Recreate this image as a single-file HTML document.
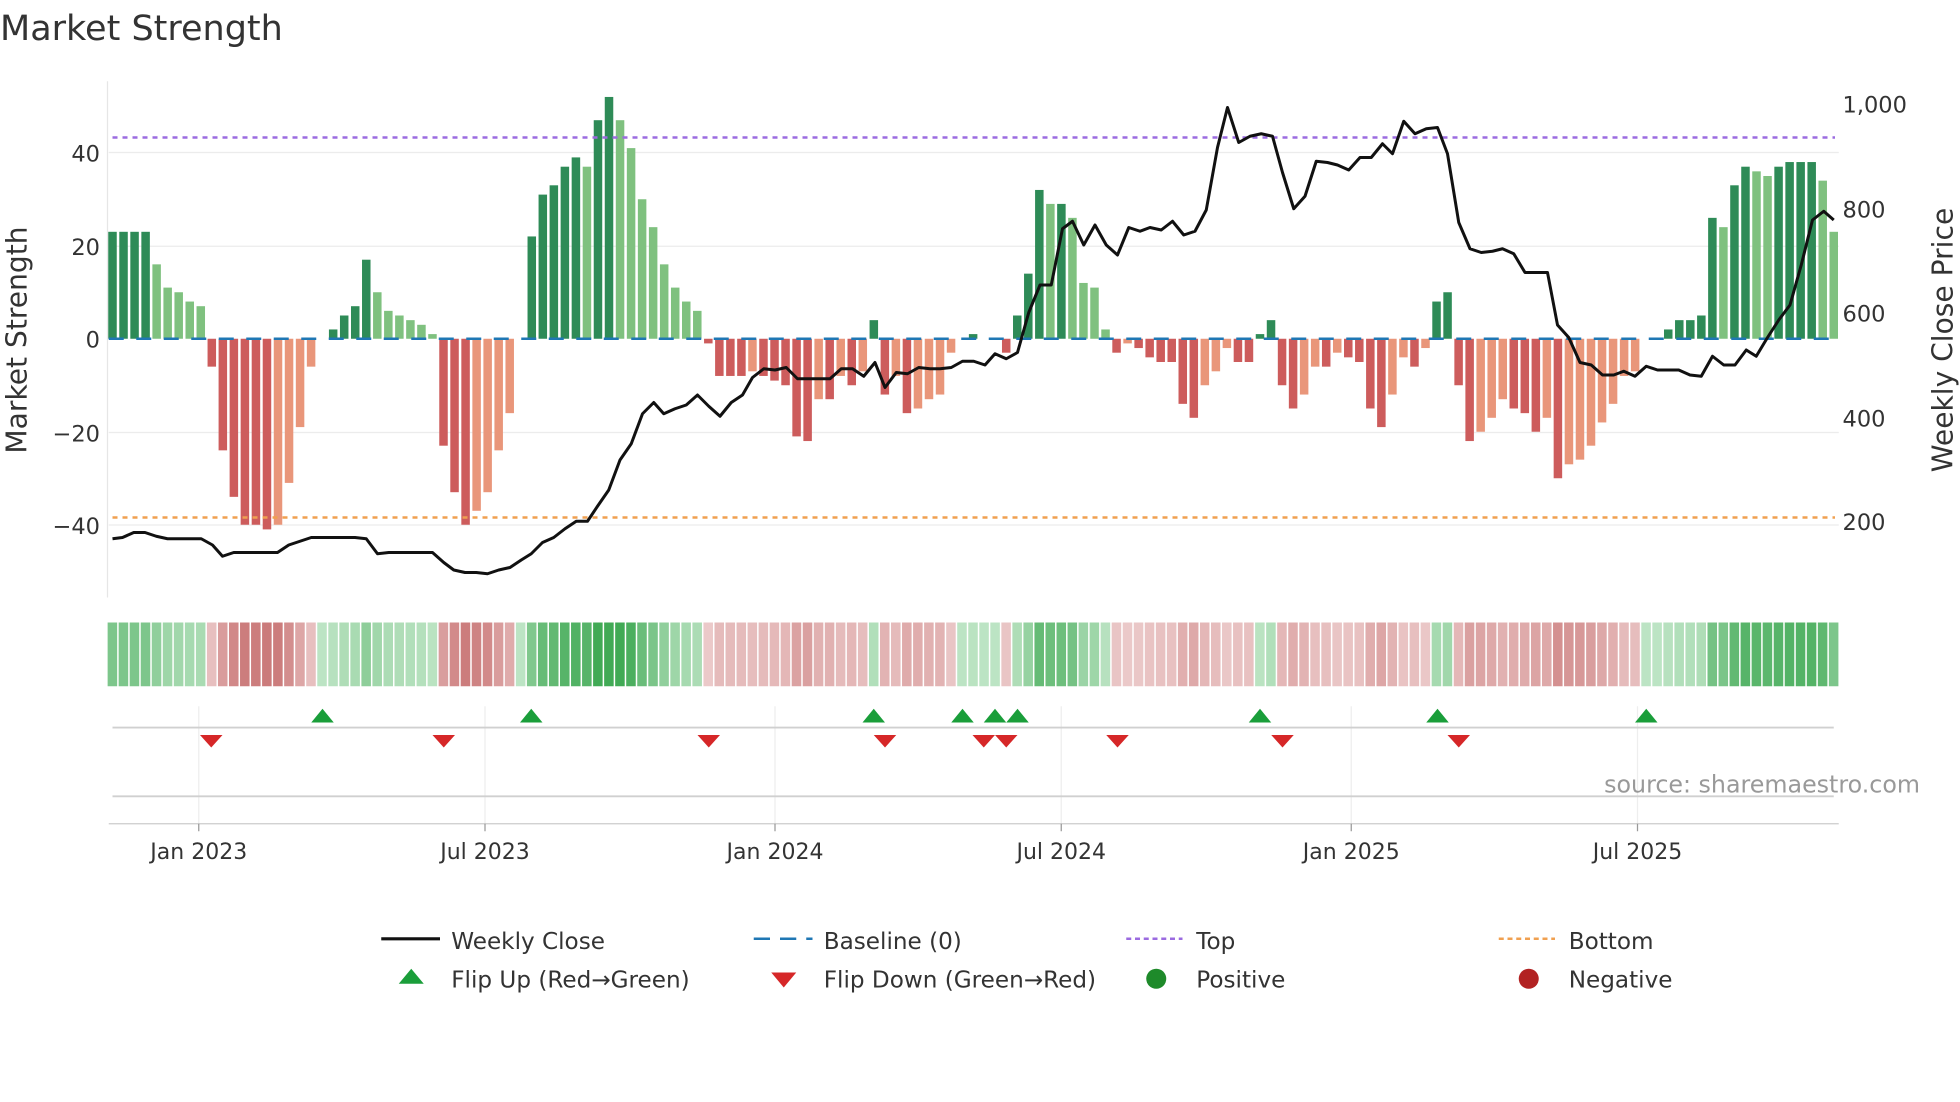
<!DOCTYPE html>
<html><head><meta charset="utf-8"><style>
html,body{margin:0;padding:0;background:#fff;width:1960px;height:1102px;overflow:hidden}
svg{display:block;font-family:"DejaVu Sans","Liberation Sans",sans-serif}
</style></head><body>
<svg id="s" width="1960" height="1102" viewBox="0 0 1568 881.6" xmlns="http://www.w3.org/2000/svg">
<rect width="1568" height="882" fill="#fff"/>
<text x="0" y="32" font-size="28" fill="#333">Market Strength</text>
<g stroke="#ececec" stroke-width="1">
<line x1="87" x2="1471" y1="122" y2="122"/><line x1="87" x2="1471" y1="197" y2="197"/>
<line x1="87" x2="1471" y1="346" y2="346"/><line x1="87" x2="1471" y1="420" y2="420"/>
</g>
<line x1="86" x2="86" y1="65" y2="478" stroke="#e6e6e6"/>
<g font-size="18" fill="#333" text-anchor="end">
<text x="80" y="129">40</text><text x="80" y="204">20</text><text x="80" y="278">0</text>
<text x="80" y="353">−20</text><text x="80" y="427">−40</text>
</g>
<g font-size="18" fill="#333">
<text x="1474" y="90">1,000</text><text x="1474" y="174">800</text><text x="1474" y="257">600</text>
<text x="1474" y="341">400</text><text x="1474" y="424">200</text>
</g>
<text transform="translate(21,272) rotate(-90)" font-size="22.5" fill="#333" text-anchor="middle">Market Strength</text>
<text transform="translate(1562,272) rotate(-90)" font-size="22.5" fill="#333" text-anchor="middle">Weekly Close Price</text>
<g id="bars"></g>
<g id="heat"></g>
<line x1="87" x2="1471" y1="271" y2="271" stroke="#1f77b4" stroke-width="2" stroke-dasharray="12,10"/>
<line x1="90" x2="1468" y1="110" y2="110" stroke="#9b6be0" stroke-width="2" stroke-dasharray="4,4"/>
<line x1="90" x2="1468" y1="414" y2="414" stroke="#f0a050" stroke-width="2" stroke-dasharray="4,4"/>
<polyline id="price" fill="none" stroke="#111" stroke-width="2.4" stroke-linejoin="round"/>
<g stroke="#eee"><line x1="159" x2="159" y1="565" y2="660"/><line x1="388" x2="388" y1="565" y2="660"/><line x1="620" x2="620" y1="565" y2="660"/><line x1="849" x2="849" y1="565" y2="660"/><line x1="1081" x2="1081" y1="565" y2="660"/><line x1="1310" x2="1310" y1="565" y2="660"/></g>
<line x1="90" x2="1467" y1="582" y2="582" stroke="#d0d0d0" stroke-width="1.5"/>
<line x1="90" x2="1467" y1="637" y2="637" stroke="#d0d0d0" stroke-width="1.5"/>
<line x1="87" x2="1471" y1="659" y2="659" stroke="#ccc" stroke-width="1"/>
<g id="mk"></g>
<text x="1536" y="634" font-size="19" fill="#999" text-anchor="end">source: sharemaestro.com</text>
<g stroke="#999"><line x1="159" x2="159" y1="659" y2="665"/><line x1="388" x2="388" y1="659" y2="665"/><line x1="620" x2="620" y1="659" y2="665"/><line x1="849" x2="849" y1="659" y2="665"/><line x1="1081" x2="1081" y1="659" y2="665"/><line x1="1310" x2="1310" y1="659" y2="665"/></g>
<g font-size="17.6" fill="#333" text-anchor="middle">
<text x="159" y="687">Jan 2023</text><text x="388" y="687">Jul 2023</text><text x="620" y="687">Jan 2024</text>
<text x="849" y="687">Jul 2024</text><text x="1081" y="687">Jan 2025</text><text x="1310" y="687">Jul 2025</text>
</g>
<g font-size="18.5" fill="#333">
<line x1="305" x2="352" y1="751" y2="751" stroke="#111" stroke-width="2.5"/><text x="361" y="759">Weekly Close</text>
<line x1="603" x2="650" y1="751" y2="751" stroke="#1f77b4" stroke-width="2" stroke-dasharray="13,8"/><text x="659" y="759">Baseline (0)</text>
<line x1="901" x2="946" y1="751" y2="751" stroke="#9b6be0" stroke-width="2" stroke-dasharray="4,3"/><text x="957" y="759">Top</text>
<line x1="1199" x2="1244" y1="751" y2="751" stroke="#f0a050" stroke-width="2" stroke-dasharray="4,3"/><text x="1255" y="759">Bottom</text>
<polygon points="319,787 329,775 339,787" fill="#1a9e3a"/><text x="361" y="790">Flip Up (Red→Green)</text>
<polygon points="617,778 637,778 627,790" fill="#d62728"/><text x="659" y="790">Flip Down (Green→Red)</text>
<circle cx="925" cy="783" r="8" fill="#1e8a2a"/><text x="957" y="790">Positive</text>
<circle cx="1223" cy="783" r="8" fill="#b22222"/><text x="1255" y="790">Negative</text>
</g>
</svg>
<script>
var v=[23,23,23,23,16,11,10,8,7,-6,-24,-34,-40,-40,-41,-40,-31,-19,-6,0,2,5,7,17,10,6,5,4,3,1,-23,-33,-40,-37,-33,-24,-16,0,22,31,33,37,39,37,47,52,47,41,30,24,16,11,8,6,-1,-8,-8,-8,-7,-8,-9,-10,-21,-22,-13,-13,-8,-10,-7,4,-12,-8,-16,-15,-13,-12,-3,0,1,0,0,-3,5,14,32,29,29,26,12,11,2,-3,-1,-2,-4,-5,-5,-14,-17,-10,-7,-2,-5,-5,1,4,-10,-15,-12,-6,-6,-3,-4,-5,-15,-19,-12,-4,-6,-2,8,10,-10,-22,-20,-17,-13,-15,-16,-20,-17,-30,-27,-26,-23,-18,-14,-8,-7,0,0,2,4,4,5,26,24,33,37,36,35,37,38,38,38,34,23];
var n=v.length, step=(1467-90)/(n-1), ns="http://www.w3.org/2000/svg";
var B=document.getElementById('bars'),H=document.getElementById('heat');
function el(t,a,p){var e=document.createElementNS(ns,t);for(var k in a)e.setAttribute(k,a[k]);p.appendChild(e);return e;}
for(var i=0;i<n;i++){
 var x=90+i*step, val=v[i], pv=i?v[i-1]:0;
 var dark=Math.abs(val)>=Math.abs(pv)||(val*pv<0);
 if(val!==0){
  var h=Math.abs(val)*3.72, y=val>0?271-h:271;
  var c=val>0?(dark?'#2e8b57':'#7fc17f'):(dark?'#cd5c5c':'#e9967a');
  el('rect',{x:x-3.4,y:y,width:6.8,height:h,fill:c},B);
 }
 var a=Math.min(Math.abs(val)/45,1);
 var col;
 if(val>=0){var t=0.15+0.85*a;col='rgb('+Math.round(210-t*145)+','+Math.round(238-t*68)+','+Math.round(215-t*130)+')';}
 else{var t=0.15+0.85*a;col='rgb('+Math.round(242-t*42)+','+Math.round(218-t*103)+','+Math.round(218-t*103)+')';}
 el('rect',{x:x-4.4+0.5,y:498,width:step-1.2,height:51,fill:col},H);
}
var p=[90,431,98,430,107,426,116,426,125,429,134,431,143,431,152,431,161,431,170,436,178,445,187,442,196,442,205,442,213,442,222,442,231,436,240,433,249,430,258,430,266,430,275,430,284,430,293,431,302,443,311,442,319,442,328,442,337,442,346,442,355,450,363,456,372,458,381,458,390,459,399,456,408,454,417,448,425,443,434,434,443,430,452,423,461,417,470,417,478,405,487,392,496,368,505,355,514,331,523,322,531,331,540,327,549,324,558,316,567,325,576,333,585,322,594,316,602,302,611,295,620,296,629,294,638,303,647,303,655,303,664,303,673,295,682,295,691,301,700,290,708,310,717,298,726,299,735,294,744,295,752,295,761,294,770,289,779,289,788,292,796,283,805,287,814,282,823,250,832,228,841,228,850,183,858,177,867,196,876,180,885,196,894,204,903,182,912,185,920,182,929,184,938,177,947,188,956,185,965,168,974,118,982,86,991,114,1000,109,1009,107,1018,109,1026,138,1035,167,1044,157,1053,129,1062,130,1070,132,1079,136,1088,126,1097,126,1106,115,1114,123,1123,97,1132,107,1141,103,1150,102,1158,123,1167,178,1176,199,1185,202,1194,201,1202,199,1211,203,1220,218,1229,218,1238,218,1246,260,1255,270,1264,290,1273,292,1282,300,1291,300,1299,297,1308,301,1317,293,1326,296,1335,296,1343,296,1352,300,1361,301,1370,285,1379,292,1388,292,1397,280,1405,285,1414,270,1423,256,1432,244,1441,212,1450,176,1459,169,1467,176];
var s='';for(var i=0;i<p.length;i+=2)s+=p[i]+','+p[i+1]+' ';
document.getElementById('price').setAttribute('points',s);
var M=document.getElementById('mk');
[258,425,699,770,796,814,1008,1150,1317].forEach(function(x){el('polygon',{points:(x-9)+',578 '+x+',567 '+(x+9)+',578',fill:'#1a9e3a'},M);});
[169,355,567,708,787,805,894,1026,1167].forEach(function(x){el('polygon',{points:(x-9)+',588 '+(x+9)+',588 '+x+',598',fill:'#d62728'},M);});
</script>
</body></html>
